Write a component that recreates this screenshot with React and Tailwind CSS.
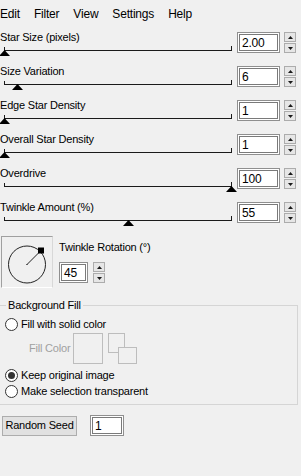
import React from "react";

function Spinner() {
  return (
    <div className="flex flex-col w-[12px] h-[21px] gap-px">
      <div className="flex-1 bg-[#e6e6e6] border border-[#acacac] flex items-center justify-center">
        <svg width="5" height="3" viewBox="0 0 5 3"><path d="M0 3 L2.5 0 L5 3Z" fill="#1a1a1a" /></svg>
      </div>
      <div className="flex-1 bg-[#e6e6e6] border border-[#acacac] flex items-center justify-center">
        <svg width="5" height="3" viewBox="0 0 5 3"><path d="M0 0 L5 0 L2.5 3Z" fill="#1a1a1a" /></svg>
      </div>
    </div>
  );
}

function Box({ value, className }) {
  return (
    <div className={"h-[21px] border border-[#8f8f8f] bg-white p-px " + className}>
      <div className="h-full border border-[#7a7a7a] flex items-center pl-[2px] text-[12px] leading-none text-black">
        {value}
      </div>
    </div>
  );
}

function SliderRow({ label, value, pct }) {
  const left = 4 + pct * 227 - 5.5;
  return (
    <div className="flex h-[34px]">
      <div className="w-[237px] flex flex-col">
        <div className="h-[18px] flex items-end text-[11px] leading-[16px] text-black whitespace-nowrap">{label}</div>
        <div className="relative h-[16px]">
          <div className="absolute left-[4px] top-[5px] w-[228px] h-px bg-[#1a1a1a]" />
          <div className="absolute left-[4px] top-[2px] w-px h-[3px] bg-[#1a1a1a]" />
          <div className="absolute left-[231px] top-[1px] w-px h-[4px] bg-[#1a1a1a]" />
          <svg className="absolute top-[5px]" style={{ left }} width="11" height="7" viewBox="0 0 11 7">
            <path d="M5.5 0 L11 6 L0 6Z" fill="#000" />
          </svg>
        </div>
      </div>
      <div className="flex items-start gap-[4px] pt-[5px]">
        <Box value={value} className="w-[43px]" />
        <Spinner />
      </div>
    </div>
  );
}

function Radio({ checked, label }) {
  return (
    <div className="flex items-center h-[16px] pl-[7px] gap-[3px]">
      <div className="w-[13px] h-[13px] rounded-full border border-[#333] bg-white flex items-center justify-center">
        {checked && <div className="w-[7px] h-[7px] rounded-full bg-[#333]" />}
      </div>
      <span className="text-[11px] leading-[16px] text-black whitespace-nowrap">{label}</span>
    </div>
  );
}

export default function App() {
  return (
    <div className="w-[301px] h-[476px] overflow-hidden bg-[#f0f0f0] font-['Liberation_Sans',Arial,sans-serif] tracking-[-0.2px] text-black">
      {/* Menu */}
      <div className="h-[27px] flex items-center gap-[14px] text-[12px] leading-[16px] pt-px">
        <span>Edit</span>
        <span>Filter</span>
        <span>View</span>
        <span>Settings</span>
        <span>Help</span>
      </div>

      <SliderRow label="Star Size (pixels)" value="2.00" pct={0} />
      <SliderRow label="Size Variation" value="6" pct={0.06} />
      <SliderRow label="Edge Star Density" value="1" pct={0} />
      <SliderRow label="Overall Star Density" value="1" pct={0} />
      <SliderRow label="Overdrive" value="100" pct={1} />
      <SliderRow label="Twinkle Amount (%)" value="55" pct={0.55} />

      {/* Twinkle rotation */}
      <div className="flex mt-[5px] pl-[1px]">
        <div className="w-[52px] h-[52px] border-t border-l border-[#a0a0a0] border-r border-b border-r-[#d8d8d8] border-b-[#ffffff]">
          <svg width="50" height="50" viewBox="0 0 50 50">
            <circle cx="25" cy="27.5" r="18.5" fill="none" stroke="#222" strokeWidth="1" />
            <line x1="25" y1="27.5" x2="39" y2="13.5" stroke="#222" strokeWidth="1" />
            <rect x="36" y="10.5" width="6" height="6" fill="#000" />
            <rect x="24.5" y="27" width="1" height="1" fill="#000" />
          </svg>
        </div>
        <div className="ml-[6px] flex flex-col">
          <div className="h-[18px] flex items-center text-[11px] leading-[16px] mt-[2px] whitespace-nowrap">Twinkle Rotation (°)</div>
          <div className="flex items-start gap-[5px] mt-[6px]">
            <Box value="45" className="w-[29px]" />
            <Spinner />
          </div>
        </div>
      </div>

      {/* Background fill */}
      <fieldset className="ml-[-3px] w-[301px] mt-[9px] border border-[#d5d5d5] pb-[5px]">
        <legend className="ml-[8px] px-[2px] text-[11px] leading-[16px]">Background Fill</legend>
        <div className="mt-[3px]">
          <Radio label="Fill with solid color" />
        </div>
        <div className="flex items-start h-[31px] mt-[1px] pl-[3px]">
          <span className="text-[11px] leading-[16px] text-[#a0a0a0] mt-[7px] ml-[28px] w-[44px] whitespace-nowrap">Fill Color</span>
          <div className="w-[30px] h-[31px] border border-[#bdbdbd]" />
          <div className="relative ml-[5px] w-[30px] h-[31px]">
            <div className="absolute left-0 top-0 w-[17px] h-[20px] border border-[#bdbdbd]" />
            <div className="absolute left-[10px] top-[14px] w-[19px] h-[17px] border border-[#bdbdbd] bg-[#f0f0f0]" />
          </div>
        </div>
        <div className="mt-[3px]">
          <Radio checked label="Keep original image" />
        </div>
        <Radio label="Make selection transparent" />
      </fieldset>

      {/* Random seed */}
      <div className="flex items-center mt-[10px] pl-[2px] gap-[13px]">
        <div className="w-[75px] h-[20px] bg-[#e1e1e1] border border-[#adadad] flex items-center justify-center text-[11px] leading-none whitespace-nowrap">
          Random Seed
        </div>
        <Box value="1" className="w-[34px]" />
      </div>
    </div>
  );
}
